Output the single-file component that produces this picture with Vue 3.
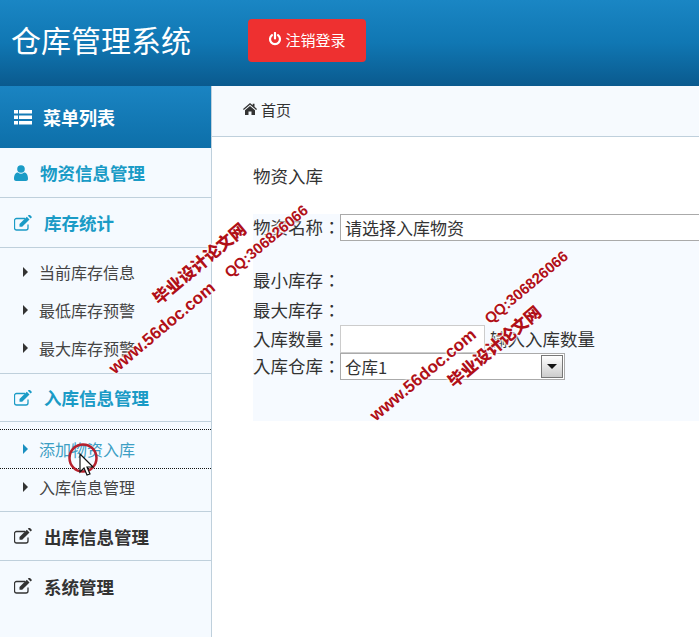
<script setup>
const marks = [
  { id: 1, cls: 'url', text: 'www.56doc.com', x: 162, y: 328 },
  { id: 2, cls: 'cn', text: '毕业设计论文网', x: 199, y: 263 },
  { id: 3, cls: 'qq', text: 'QQ:306826066', x: 266, y: 241 },
  { id: 4, cls: 'url', text: 'www.56doc.com', x: 423, y: 375 },
  { id: 5, cls: 'cn', text: '毕业设计论文网', x: 494, y: 346 },
  { id: 6, cls: 'qq', text: 'QQ:306826066', x: 526, y: 287 },
]
</script>

<template>
  <div class="page">
    <header class="top">
      <h1 class="title">仓库管理系统</h1>
      <button class="logout">
        <svg class="pw" viewBox="0 0 14 14" width="14" height="14"><path d="M4 3.2A5 5 0 1 0 10 3.2" fill="none" stroke="#fff" stroke-width="2.2" stroke-linecap="round"/><path d="M7 1v5.5" stroke="#fff" stroke-width="2.2" stroke-linecap="round"/></svg>
        <span>注销登录</span>
      </button>
    </header>
    <div class="body">
      <aside class="side">
        <div class="menu-head">
          <svg width="18" height="15" viewBox="0 0 18 15" fill="#fff"><path d="M0 0h4v3.400H0zM5 0h13v3.400H5zM0 5.500h4v3.400H0zM5 5.500h13v3.400H5zM0 11h4v3.400H0zM5 11h13v3.400H5z"/></svg>
          <span>菜单列表</span>
        </div>
        <div class="group blue g1">
          <svg class="uicon" width="14" height="16" viewBox="0 0 14 16" fill="#1a9bc6"><circle cx="7" cy="4" r="3.8"/><path d="M0 14c0-5 2-6.500 4-6.500 1 .8 2 1.200 3 1.200s2-.4 3-1.200c2 0 4 1.500 4 6.500 0 1.200-1 2-2 2H2c-1 0-2-.8-2-2z"/></svg>
          <span>物资信息管理</span>
        </div>
        <div class="group blue">
          <svg class="eicon" width="18" height="16" viewBox="0 0 18 16"><use href="#edit"/></svg>
          <span class="gap">库存统计</span>
        </div>
        <ul class="subs s1">
          <li><i class="tri"></i>当前库存信息</li>
          <li><i class="tri"></i>最低库存预警</li>
          <li><i class="tri"></i>最大库存预警</li>
        </ul>
        <div class="group blue short">
          <svg class="eicon" width="18" height="16" viewBox="0 0 18 16"><use href="#edit"/></svg>
          <span class="gap">入库信息管理</span>
        </div>
        <ul class="subs s2">
          <li class="active"><i class="tri"></i>添加物资入库</li>
          <li><i class="tri"></i>入库信息管理</li>
        </ul>
        <div class="group mid">
          <svg class="eicon" width="18" height="16" viewBox="0 0 18 16"><use href="#edit"/></svg>
          <span class="gap">出库信息管理</span>
        </div>
        <div class="group last">
          <svg class="eicon" width="18" height="16" viewBox="0 0 18 16"><use href="#edit"/></svg>
          <span class="gap">系统管理</span>
        </div>
      </aside>
      <main class="main">
        <div class="crumb">
          <svg width="14" height="12" viewBox="0 0 14 12" fill="#333"><path d="M7 0 0 6l.8 1L7 1.800 13.200 7l.8-1-2.500-2.200V.8h-1.800v1.400zM2 7.200V12h3.500V8.500h3V12H12V7.200L7 3z"/></svg>
          <span>首页</span>
        </div>
        <div class="content">
          <div class="heading">物资入库</div>
          <form class="form" @submit.prevent>
            <div class="row r-name"><label>物资名称：</label><input class="wide" value="请选择入库物资" /></div>
            <div class="row r-min"><label>最小库存：</label></div>
            <div class="row r-max"><label>最大库存：</label></div>
            <div class="row r-qty"><label>入库数量：</label><input class="qty" /><span class="hint">输入入库数量</span></div>
            <div class="row r-store"><label>入库仓库：</label>
              <div class="select"><span>仓库1</span><i class="arrow"></i></div>
            </div>
          </form>
        </div>
      </main>
    </div>

    <div
      v-for="m in marks"
      :key="m.id"
      class="wm"
      :class="m.cls"
      :style="{ left: m.x + 'px', top: m.y + 'px' }"
    >{{ m.text }}</div>

    <svg class="cursor" width="32" height="46" viewBox="0 0 32 46">
      <circle cx="15" cy="15" r="13.500" fill="none" stroke="#b5202c" stroke-width="2.500"/>
      <path d="M12 12v18l4-4 3 7 3-1-3-7h6z" transform="translate(0 -1)" fill="#fff" stroke="#111" stroke-width="1.200"/>
    </svg>

    <svg width="0" height="0" class="defs">
      <defs>
        <g id="edit">
          <path d="M14 9.500V13a2 2 0 0 1-2 2H2.500a2 2 0 0 1-2-2V5.500a2 2 0 0 1 2-2H11" fill="none" stroke="currentColor" stroke-width="1.300"/>
          <path d="M5.500 9 12.800 1.700l2.700 2.700L8.200 11.700H5.500z" fill="currentColor"/>
          <path d="M13.800.8 14.700 0a1 1 0 0 1 1.300 0l1.500 1.500a1 1 0 0 1 0 1.300l-.9.800z" fill="currentColor"/>
        </g>
      </defs>
    </svg>
  </div>
</template>

<style>
html, body { margin: 0; background: #fff; overflow: hidden; }
</style>

<style scoped>
.page {
  position: relative;
  width: 699px;
  height: 637px;
  overflow: hidden;
  font-family: "Noto Sans CJK SC", "Liberation Sans", sans-serif;
  color: #333;
}
.defs { position: absolute; }
.top {
  height: 86px;
  display: flex;
  align-items: center;
  background: linear-gradient(180deg, #1a86c4 0%, #1077b3 50%, #0a5a8e 100%);
}
.title {
  margin: -9px 0 0 11px;
  width: 237px;
  font-size: 30px;
  font-weight: 400;
  line-height: 40px;
  color: #fff;
}
.logout {
  width: 118px;
  height: 43px;
  margin-top: -6px;
  border: 0;
  border-radius: 4px;
  background: #ee3030;
  color: #fff;
  font: inherit;
  font-size: 15px;
  display: flex;
  align-items: center;
  justify-content: center;
  gap: 3px;
  padding: 0 0 2px;
}
.body { display: flex; height: 551px; }
.side {
  width: 211px;
  flex: none;
  background: #f5faff;
  border-right: 1px solid #bfd0dc;
}
.menu-head {
  height: 62px;
  background: linear-gradient(180deg, #1a84c2, #0d6fa9);
  color: #fff;
  font-size: 18px;
  font-weight: 700;
  display: flex;
  align-items: center;
  gap: 11px;
  padding-left: 14px;
  box-sizing: border-box;
}
.group {
  height: 50px;
  box-sizing: border-box;
  border-bottom: 1px solid #bfd0dc;
  display: flex;
  align-items: center;
  padding-left: 14px;
  font-size: 17.500px;
  font-weight: 700;
  color: #333;
}
.group.short { height: 48px; }
.group.mid { height: 49px; }
.group.last { border-bottom: 0; }
.group.blue { color: #1a9bc6; }
.g1 { gap: 12px; }
.gap { margin-left: 12px; }
.group .eicon { flex: none; color: inherit; }
.subs {
  list-style: none;
  margin: 0;
  padding: 0;
  border-bottom: 1px solid #bfd0dc;
  font-size: 16px;
  color: #444;
}
.s1 { height: 126px; box-sizing: border-box; padding-top: 5px; }
.s1 li { height: 38px; }
.s2 { height: 90px; box-sizing: border-box; padding-top: 7px; }
.s2 li { height: 36px; }
.subs li {
  display: flex;
  align-items: center;
  padding-left: 23px;
  box-sizing: border-box;
}
.subs li.active {
  color: #3d9fc4;
  border-top: 1px dotted #111;
  border-bottom: 1px dotted #111;
  height: 40px;
}
.tri {
  width: 0;
  height: 0;
  margin-right: 11px;
  border-left: 5px solid #333;
  border-top: 5px solid transparent;
  border-bottom: 5px solid transparent;
}
.active .tri { border-left-color: #1a8fc0; }
.main { flex: 1; min-width: 0; }
.crumb {
  height: 51px;
  box-sizing: border-box;
  background: #f6fafe;
  border-bottom: 1px solid #bfd0dc;
  display: flex;
  align-items: center;
  gap: 4px;
  padding: 0 0 4px 31px;
  font-size: 15px;
}
.content { padding: 0 0 0 41px; }
.heading {
  font-size: 17.500px;
  line-height: 24px;
  padding-top: 27px;
  height: 77px;
  box-sizing: border-box;
}
.form {
  background: #f6faff;
  height: 207px;
  box-sizing: border-box;
  font-size: 17.500px;
}
.row { display: flex; align-items: center; white-space: nowrap; }
.row label {
  width: 87px;
  flex: none;
  margin-top: -2px;
  font-family: "Noto Sans CJK TC", "Noto Sans CJK SC", sans-serif;
}
.r-name { height: 27px; }
.r-min { height: 30px; margin-top: 24px; }
.r-max { height: 30px; }
.r-qty { height: 28px; }
.r-store { height: 27px; }
.wide, .qty {
  box-sizing: border-box;
  font: inherit;
  color: #333;
  background: #fff;
  border: 1px solid #aaa;
  padding: 0 4px;
  height: 27px;
  outline: none;
}
.wide { width: 400px; flex: none; font-size: 17px; }
.qty { width: 145px; flex: none; border-color: #ccc; height: 28px; }
.hint { margin-left: 5px; margin-top: -2px; }
.select {
  box-sizing: border-box;
  width: 225px;
  height: 27px;
  background: #fff;
  border: 1px solid #aaa;
  display: flex;
  align-items: center;
  justify-content: space-between;
  padding: 0 1px 0 4px;
  font-size: 16.500px;
}
.arrow {
  position: relative;
  width: 22px;
  height: 23px;
  box-sizing: border-box;
  border: 1px solid #777;
  background: linear-gradient(180deg, #fff, #ccc);
}
.arrow::after {
  content: "";
  position: absolute;
  left: 5px;
  top: 8px;
  border-left: 5px solid transparent;
  border-right: 5px solid transparent;
  border-top: 5px solid #111;
}
.wm {
  position: absolute;
  transform: translate(-50%, -50%) rotate(-40deg);
  color: #b01018;
  font-family: "Liberation Sans", sans-serif;
  font-weight: 700;
  white-space: nowrap;
  line-height: 1;
  pointer-events: none;
  text-shadow: 0 0 2px #fff, 0 0 3px #fff, 0 0 3px #fff;
}
.wm.qq { font-size: 15px; }
.wm.cn { font-size: 16.500px; font-family: "Noto Sans CJK SC", sans-serif; font-weight: 900; }
.wm.url { font-size: 17px; }
.cursor { position: absolute; left: 68px; top: 443px; }
</style>
